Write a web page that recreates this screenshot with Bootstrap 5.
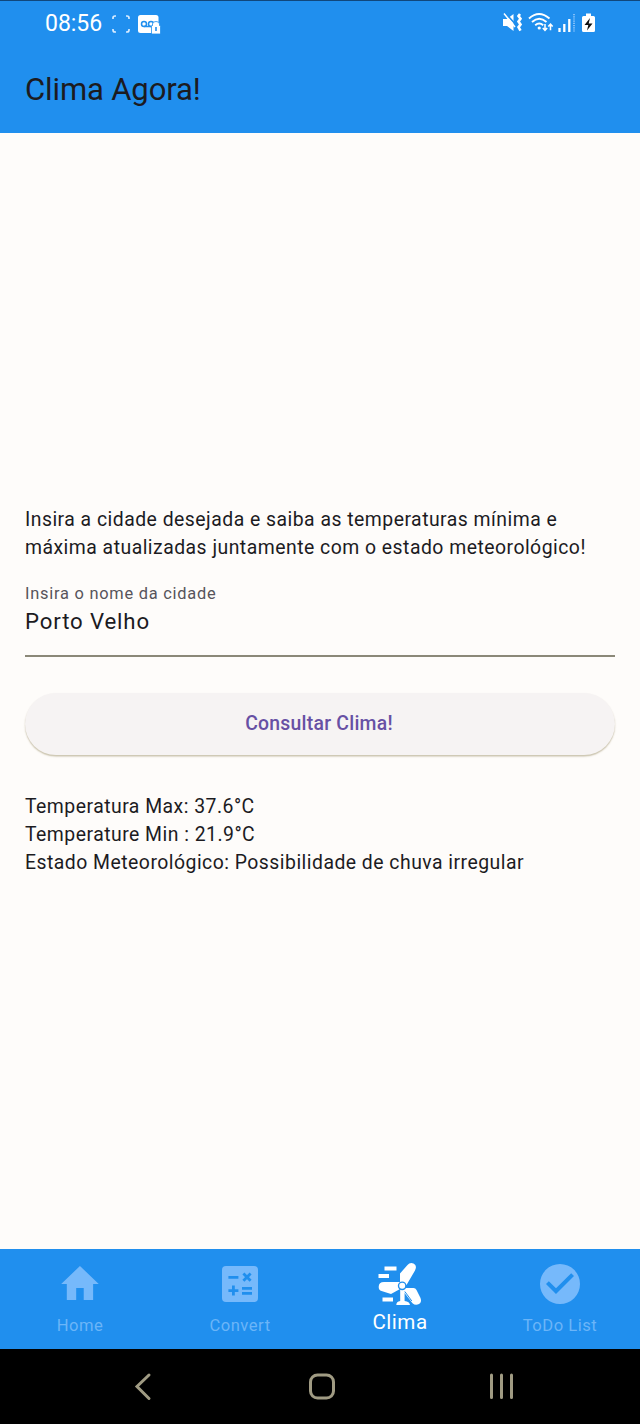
<!DOCTYPE html>
<html lang="pt-BR">
<head>
<meta charset="utf-8">
<meta name="viewport" content="width=device-width, initial-scale=1">
<title>Clima Agora!</title>
<link href="https://cdn.jsdelivr.net/npm/bootstrap@5.3.0/dist/css/bootstrap.min.css" rel="stylesheet">
<style>
  body { font-family: Roboto, sans-serif; background: #fefcfa; color: #1c1b1f; height: 1424px; overflow: hidden; }
  .app-blue { background: #208fee; }
  .app-top { height: 133px; border-top: 1px solid #10477c; }
  .status { height: 46px; padding: 0 44px 0 45px; color: #fff; }
  .clock { font-size: 23px; line-height: 44px; width: 67px; letter-spacing: -.05px; }
  .app-title { font-size: 31px; line-height: 36px; margin: 25px 0 0 25px; font-weight: 400; letter-spacing: -.12px; }
  .page { padding: 1px 25px 0; }
  .copy { font-size: 19.4px; line-height: 28px; letter-spacing: .48px; }
  .field-label { font-size: 16.4px; line-height: 22px; letter-spacing: .76px; color: #57545b; margin-top: 21px; }
  .city-input, .city-input:focus { font-size: 22.2px; line-height: 28px; height: 52px; padding: 1px 0 19px; letter-spacing: .86px; border: 0; border-bottom: 2px solid #8b8878; border-radius: 0; background: transparent; color: #1c1b1f; box-shadow: none; }
  .btn-query { height: 62px; border-radius: 31px; background: #f6f3f3; color: #6750a4; border: 0; font-size: 19.4px; font-weight: 500; letter-spacing: .24px; margin-top: 36px; padding: 0 2px 0 0; box-shadow: 0 1.5px 1.5px rgba(110,95,40,.36); }
  .results { margin-top: 38px; }
  .tabs { height: 100px; }
  .tab-item { color: #6bb5f8; font-size: 16.6px; line-height: 20px; letter-spacing: .5px; padding-top: 11px; }
  .tab-item svg { height: 48px; width: 48px; display: block; margin-bottom: 8px; }
  .tab-item.active { color: #fff; font-size: 20.6px; letter-spacing: .5px; }
  .tab-item.active svg { margin-bottom: 4px; }
  .system { height: 75px; background: #000; padding-top: 17px; }
</style>
</head>
<body class="d-flex flex-column">
<header class="app-blue app-top flex-shrink-0">
  <div class="status d-flex align-items-center">
    <span class="clock">08:56</span>
    <svg width="18" height="18" viewBox="0 0 18 18" fill="none" stroke="#d8ecff" stroke-width="1.7"><path d="M1 4V3Q1 1 3 1H4M14 1h1q2 0 2 2v1M17 14v1q0 2-2 2h-1M4 17H3q-2 0-2-2v-1"/></svg>
    <svg class="ms-2" width="23" height="19" viewBox="0 0 23 19"><rect width="20.500" height="18" rx="2.500" fill="#fff"/><g fill="none" stroke="#208fee" stroke-width="1.500"><circle cx="6" cy="9" r="2.500"/><circle cx="13" cy="9" r="2.500"/><path d="M6 11.500h7"/></g><path d="M13.500 19v-7.500q0-1 1-1V9q0-2.500 3.500-2.500T21.500 9v1.500q1 0 1 1V19z" fill="#fff" stroke="#208fee" stroke-width=".8"/><path d="M18 12v4" stroke="#208fee" stroke-width="1.600"/></svg>
    <div class="d-flex align-items-center ms-auto">
      <svg width="94" height="22" viewBox="0 1 94 22" fill="none" stroke="#fff">
        <path d="M1 7h4l6.500-5v17L5 14H1z" fill="#fff" stroke="none"/><path d="M3.500 1.200l9.500 10.500" stroke="#208fee" stroke-width="1.600"/><path d="M2 1.500l11 13.500" stroke-width="1.500"/><path d="M18 2l-1.500 2 2 2.800-2 2.800 2 2.800-2 2.800 2 3.500" stroke-width="2.600"/>
        <path d="M27 6.500q10-9 20.500 0M30 10q7.200-6.500 14.500 0M33.200 13.200q4-3.500 8 0" stroke-width="1.900"/><circle cx="37.200" cy="16" r="1.600" fill="#fff" stroke="none"/><path d="M43 12v6M40.800 16l2.200 2.300 2.200-2.300M48.500 18.300v-6M46.300 14.500l2.200-2.300 2.200 2.300" stroke-width="1.500"/>
        <path d="M57.500 16v4M62.300 12v8M67.300 7v13" stroke-width="2.300"/><path d="M72 2v18" stroke="#8cc5fa" stroke-width="1.800" stroke-dasharray="1.2 1"/>
        <path d="M84 1.500h5V4h2.500q1.500 0 1.500 1.500v13q0 1.500-1.500 1.500h-10q-1.500 0-1.500-1.500v-13Q80 4 81.500 4H84z" fill="#fff" stroke="none"/><path d="M88 6l-5.500 7h3.800l-1.300 5.500 5.500-7h-3.800z" fill="#111" stroke="none"/>
      </svg>
    </div>
  </div>
  <h1 class="app-title">Clima Agora!</h1>
</header>
<main class="page flex-grow-1 d-flex flex-column justify-content-center">
  <p class="copy mb-0 text-nowrap">Insira a cidade desejada e saiba as temperaturas mínima e<br>máxima atualizadas juntamente com o estado meteorológico!</p>
  <label class="field-label d-block" for="city">Insira o nome da cidade</label>
  <input id="city" class="form-control city-input" value="Porto Velho">
  <button class="btn btn-query w-100" type="button">Consultar Clima!</button>
  <div class="copy results">Temperatura Max: 37.6°C<br>Temperature Min : 21.9°C<br>Estado Meteorológico: Possibilidade de chuva irregular</div>
</main>
<nav class="tabs app-blue row g-0 flex-shrink-0">
  <div class="col tab-item d-flex flex-column align-items-center">
    <svg viewBox="0 0 24 24" fill="#76b9fb"><path d="M10 20v-6h4v6h5v-8h3L12 3 2 12h3v8z" transform="translate(.7 0) scale(.94 1)"/></svg><span>Home</span>
  </div>
  <div class="col tab-item d-flex flex-column align-items-center">
    <svg viewBox="0 0 24 24" fill="#76b9fb"><rect x="3" y="3" width="18" height="18" rx="2"/><path d="M6.200 8.700h5M13.700 6.800l3.600 3.600m0-3.600l-3.600 3.600M6.200 15.300h5m-2.500-2.500v5M13 14.200h5M13 16.700h5" fill="none" stroke="#208fee" stroke-width="1.400"/></svg><span>Convert</span>
  </div>
  <div class="col tab-item active d-flex flex-column align-items-center">
    <svg viewBox="0 0 48 48" fill="#fff"><path d="M8.500 6.500h12v4H8.500zM2.500 14h10.500v4H2.500zM6.500 37.500h10.500v4H6.500z"/><path d="M24 25V13.500L31.500 5Q34 2 37.500 3.500q4 2 1.500 7L30.500 25z"/><path d="M26 22H8Q2.700 22 2.700 27q0 3 2.800 4l9.500 3 9-5z"/><path d="M28 28h9.500q2 0 3 2l4 8q1.500 4-1.500 6-3.500 2-6.500-.8L27 31z"/><path d="M24.200 29h4.400v12q5 .5 5.400 4H20.300q0-3.500 3.900-4z"/><path d="M28.800 31.500l7 9.500" stroke="#208fee" stroke-width="1"/><circle cx="26.200" cy="25.800" r="3.700" stroke="#208fee" stroke-width="1.400"/></svg><span>Clima</span>
  </div>
  <div class="col tab-item d-flex flex-column align-items-center">
    <svg viewBox="0 0 24 24" fill="#76b9fb"><path d="M12 2a10 10 0 100 20 10 10 0 000-20zm-2 15l-5-5 1.410-1.410L10 14.170l7.590-7.590L19 8l-9 9z"/></svg><span>ToDo List</span>
  </div>
</nav>
<footer class="system flex-shrink-0 d-flex justify-content-center">
  <svg width="400" height="40" viewBox="120 1366 400 40" fill="none" stroke="#a09b83" stroke-width="3"><path d="M149 1375l-12 11.500 12 12" stroke-linecap="round"/><rect x="310.500" y="1375" width="23" height="23" rx="7"/><path d="M491.500 1375v22.500M501.500 1375v22.500M511.500 1375v22.500" stroke-linecap="round"/></svg>
</footer>
<script src="https://cdn.jsdelivr.net/npm/bootstrap@5.3.0/dist/js/bootstrap.bundle.min.js"></script>
</body>
</html>
